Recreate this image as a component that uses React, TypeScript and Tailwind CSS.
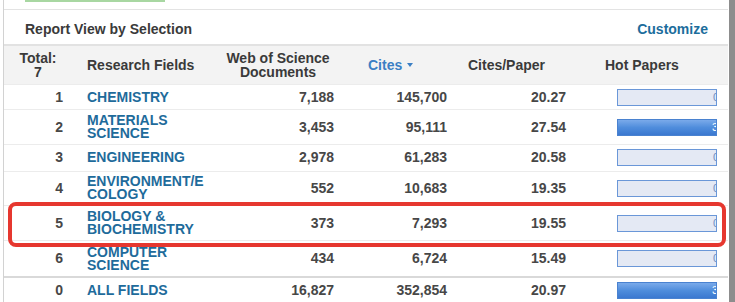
import React from 'react';

type Row = {
  rank: string;
  field: string[];
  docs: string;
  cites: string;
  perPaper: string;
  hot: number;
  h: string;
  last?: boolean;
};

const rows: Row[] = [
  { rank: '1', field: ['CHEMISTRY'], docs: '7,188', cites: '145,700', perPaper: '20.27', hot: 0, h: 'h-[25px]' },
  { rank: '2', field: ['MATERIALS', 'SCIENCE'], docs: '3,453', cites: '95,111', perPaper: '27.54', hot: 3, h: 'h-[35px]' },
  { rank: '3', field: ['ENGINEERING'], docs: '2,978', cites: '61,283', perPaper: '20.58', hot: 0, h: 'h-[27px]' },
  { rank: '4', field: ['ENVIRONMENT/E', 'COLOGY'], docs: '552', cites: '10,683', perPaper: '19.35', hot: 0, h: 'h-[34px]' },
  { rank: '5', field: ['BIOLOGY &', 'BIOCHEMISTRY'], docs: '373', cites: '7,293', perPaper: '19.55', hot: 0, h: 'h-[36px]' },
  { rank: '6', field: ['COMPUTER', 'SCIENCE'], docs: '434', cites: '6,724', perPaper: '15.49', hot: 0, h: 'h-[36px]' },
  { rank: '0', field: ['ALL FIELDS'], docs: '16,827', cites: '352,854', perPaper: '20.97', hot: 3, h: 'h-[26px]', last: true },
];

const HotBar = ({ value }: { value: number }) =>
  value > 0 ? (
    <div className="relative w-[100px] h-[17px] overflow-hidden border border-[#4a82d0] bg-gradient-to-b from-[#7aaaea] via-[#4f8ddc] to-[#3b78d0]">
      <span className="absolute right-[-2px] top-0 text-[11px] leading-[15px] text-white">{value}</span>
    </div>
  ) : (
    <div className="relative w-[100px] h-[17px] overflow-hidden border-[1.5px] border-[#6a97d8] bg-[#e4e9f4]">
      <span className="absolute right-[-3px] top-0 text-[11px] leading-[14px] text-[#6b8cc4]">{value}</span>
    </div>
  );

export default function App() {
  return (
    <div className="relative flex w-[735px] h-[302px] overflow-hidden bg-white font-['Liberation_Sans',Arial,sans-serif] text-[14px] text-[#3a3a3a]">
      <div className="w-[3px]" />

      <div className="flex flex-col w-[725px] border-l border-[#d2d2d2]">
        <div className="h-[10px] pl-[21px] border-b border-[#e3e3e3]">
          <div className="w-[140px] h-[2px] bg-[#a8d7a2]" />
        </div>

        <div className="flex items-center justify-between h-[36px] pt-[6px] pl-[21px] pr-[20px] border-b-2 border-[#e2e2e2] font-bold">
          <span className="text-[#3a3a3a]">Report View by Selection</span>
          <span className="text-[#1c6d9c]">Customize</span>
        </div>

        <div className="grid grid-cols-[68px_140px_130px_113px_119px_1fr] items-center h-[39px] bg-[#f3f3f3] font-bold leading-[14px]">
          <div className="text-center">
            Total:
            <br />7
          </div>
          <div className="pl-[15px]">Research Fields</div>
          <div className="text-center pl-[2px]">
            Web of Science
            <br />
            Documents
          </div>
          <div className="flex items-center pl-[26px] text-[#3b7fc4]">
            Cites
            <span className="ml-[5px] w-0 h-0 border-l-[3px] border-r-[3px] border-t-[4px] border-l-transparent border-r-transparent border-t-[#3b7fc4]" />
          </div>
          <div className="pl-[13px]">Cites/Paper</div>
          <div className="pl-[31px]">Hot Papers</div>
        </div>

        {rows.map((r) => (
          <div
            key={r.rank}
            className={`grid grid-cols-[68px_140px_130px_113px_119px_1fr] items-center font-bold ${r.h} ${
              r.last ? 'border-t-2 border-[#d9d9d9]' : 'border-t border-[#ececec]'
            }`}
          >
            <div className="text-right pr-[9px] text-[#474747]">{r.rank}</div>
            <div className="pl-[15px] text-[#1e6b9b] leading-[13px] whitespace-nowrap">
              {r.field.map((f) => (
                <div key={f}>{f}</div>
              ))}
            </div>
            <div className="text-right pr-[8px] text-[#474747]">{r.docs}</div>
            <div className="text-right pr-[8px] text-[#474747]">{r.cites}</div>
            <div className="text-right pr-[8px] text-[#474747]">{r.perPaper}</div>
            <div className="pl-[43px] font-normal">
              <HotBar value={r.hot} />
            </div>
          </div>
        ))}
      </div>

      <div className="w-[1px]" />
      <div className="w-[6px] bg-[#8d8d8d]" />

      {/* highlight annotation */}
      <div className="absolute left-[8px] top-[202px] w-[718px] h-[45px] rounded-[8px] border-[4px] border-[#e6372f]" />
    </div>
  );
}
